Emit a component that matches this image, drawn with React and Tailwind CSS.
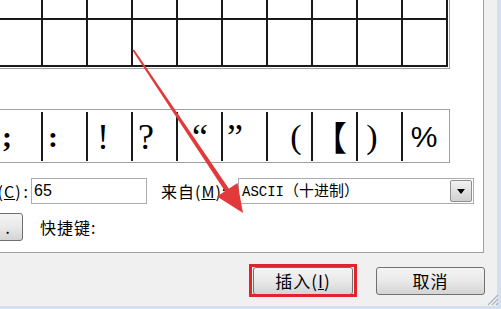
import React from "react";

const cjk = { fontFamily: '"Noto Sans CJK SC", "Liberation Sans", sans-serif' };
const serif = { fontFamily: '"Liberation Serif", "Noto Sans CJK SC", serif' };

function GridRow({ h }) {
  const cells = Array.from({ length: 10 });
  return (
    <div className={`flex border-b-2 border-[#1a1a1a] ${h}`}>
      {cells.map((_, i) => (
        <div key={i} className="w-[45px] shrink-0 border-r-2 border-[#1a1a1a]" />
      ))}
    </div>
  );
}

const symbols = [
  { ch: ";", box: "w-[18px] font-bold", font: serif, size: "text-[30px]" },
  { ch: ":", box: "w-[20px] font-bold", font: serif, size: "text-[30px]" },
  { ch: "!", box: "w-[30px]", font: serif, size: "text-[36px]" },
  { ch: "?", box: "w-[26px]", font: serif, size: "text-[36px]" },
  { ch: "\u201C", box: "w-[44px]", font: serif, size: "text-[36px]" },
  { ch: "\u201D", box: "w-[24px]", font: serif, size: "text-[36px]" },
  { ch: "(", box: "w-[56px]", font: serif, size: "text-[34px]" },
  { ch: "【", box: "w-[34px]", font: cjk, size: "text-[34px]" },
  { ch: ")", box: "w-[28px]", font: serif, size: "text-[34px]" },
  { ch: "%", box: "w-[42px]", font: { fontFamily: '"Liberation Sans", sans-serif' }, size: "text-[30px]" },
];

function Btn({ children, className = "" }) {
  return (
    <div
      className={`flex items-center justify-center rounded-[3px] border border-[#707070] bg-gradient-to-b from-[#f4f4f4] via-[#e9e9e9] to-[#d4d4d4] text-[17px] text-black ${className}`}
      style={cjk}
    >
      {children}
    </div>
  );
}

export default function App() {
  return (
    <div className="relative w-[501px] h-[309px] overflow-hidden bg-[#d3e0f0]">
      <div className="w-[497px] h-[306px] bg-[#f0f0f0] flex flex-col overflow-hidden">
        {/* white tab page */}
        <div className="w-[484px] h-[253px] shrink-0 bg-white border-r border-b border-[#a0a0a0] overflow-hidden flex flex-col">
          {/* top character grid */}
          <div className="-ml-[2px] w-fit border-r border-b border-[#a0a0a0] pr-[1px] pb-[1px]">
            <GridRow h="h-[20px]" />
            <GridRow h="h-[47px]" />
          </div>

          {/* recent symbols row */}
          <div className="-ml-[3px] mt-[40px] w-fit border border-[#a0a0a0] pt-[2px] pb-[1px] flex">
            {symbols.map((s, i) => (
              <div
                key={i}
                className={`h-[49px] shrink-0 flex items-center ${
                  i === 9 ? "w-[46px]" : "w-[45px] border-r-2 border-[#1a1a1a]"
                }`}
              >
                <span
                  className={`${s.box} ${s.size} shrink-0 text-center leading-none text-black`}
                  style={s.font}
                >
                  {s.ch}
                </span>
              </div>
            ))}
          </div>

          {/* code row */}
          <div className="mt-[15px] flex items-center h-[26px] text-[16px] text-black" style={cjk}>
            <div className="w-[28px] shrink-0 flex justify-end whitespace-nowrap">
              <span className="tracking-[1px]">
                字符代码(<span className="underline">C</span>)
              </span>
              <span className="ml-[2px]">:</span>
            </div>
            <div
              className="ml-[3px] w-[116px] h-[26px] shrink-0 border border-[#abadb3] flex items-center pl-[2px] text-[16px]"
              style={{ fontFamily: '"Liberation Sans", sans-serif' }}
            >
              65
            </div>
            <div className="ml-[14px] w-[77px] shrink-0 whitespace-nowrap tracking-[1px]">
              来自(<span className="underline">M</span>):
            </div>
            <div className="w-[236px] h-[26px] shrink-0 border border-[#abadb3] flex items-center justify-between pl-[3px] pr-[1px]">
              <span className="text-[15px] whitespace-nowrap" style={cjk}>
                <span style={{ fontFamily: '"Liberation Mono", monospace' }} className="text-[14px]">
                  ASCII
                </span>
                （十进制）
              </span>
              <div className="w-[22px] h-[22px] border border-[#8e8f8f] rounded-[2px] bg-gradient-to-b from-[#f2f2f2] to-[#d0d0d0] flex items-center justify-center">
                <svg width="8" height="5" viewBox="0 0 8 5">
                  <path d="M0 0 H8 L4 5 Z" fill="#000" />
                </svg>
              </div>
            </div>
          </div>

          {/* shortcut row */}
          <div className="mt-[9px] flex items-center h-[28px] text-[16px] text-black" style={cjk}>
            <Btn className="-ml-[17px] w-[40px] h-[28px] shrink-0 !justify-end pr-[12px]">.</Btn>
            <div className="ml-[17px] whitespace-nowrap tracking-[1px]">快捷键:</div>
          </div>
        </div>

        {/* bottom buttons */}
        <div className="flex pl-[253px] pt-[14px] gap-[23px]">
          <Btn className="w-[100px] h-[28px] shrink-0 tracking-[1px]">
            插入(<span className="underline">I</span>)
          </Btn>
          <Btn className="w-[109px] h-[28px] shrink-0 tracking-[1px]">取消</Btn>
        </div>
      </div>

      {/* red highlight rectangle */}
      <div className="absolute left-[249px] top-[264px] w-[108px] h-[33px] border-[3px] border-[#e2232a]" />

      {/* resize grip */}
      <svg className="absolute left-[485px] top-[292px]" width="14" height="14" viewBox="0 0 14 14">
        <path d="M13 3 L3 13 M13 7 L7 13 M13 11 L11 13" stroke="#a9b4c2" strokeWidth="1.2" />
      </svg>

      {/* red arrow */}
      <svg className="absolute left-0 top-0 pointer-events-none" width="501" height="309" viewBox="0 0 501 309">
        <polygon points="132.5,50.5 134,49.6 230.5,191 226.5,193.5" fill="#e23a3a" />
        <polygon points="243,213 217,196.5 237.5,183" fill="#e23a3a" />
      </svg>
    </div>
  );
}
